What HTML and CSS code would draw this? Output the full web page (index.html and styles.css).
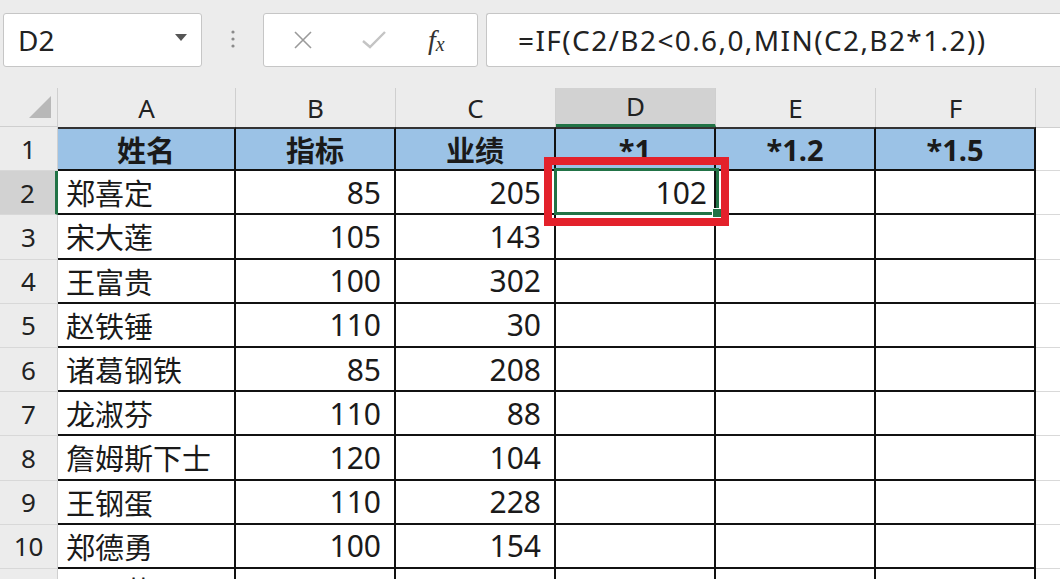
FILE: index.html
```html
<!DOCTYPE html>
<html lang="zh-CN">
<head>
    <meta charset="UTF-8">
    <title>Sheet</title>
    <link rel="stylesheet" href="styles.css">
</head>
<body>
    <div class="toolbar">
        <div class="namebox">
            <span>D2</span>
            <svg class="caret" width="12" height="7" viewBox="0 0 12 7"><path d="M0 0 L12 0 L6 7 Z" fill="#555"/></svg>
        </div>
        <div class="grip">
            <svg width="4" height="20" viewBox="0 0 4 20"><circle cx="2" cy="2" r="1.6" fill="#8a8a8a"/><circle cx="2" cy="9" r="1.6" fill="#8a8a8a"/><circle cx="2" cy="16" r="1.6" fill="#8a8a8a"/></svg>
        </div>
        <div class="fxbox">
            <svg class="icon-x" width="18" height="18" viewBox="0 0 18 18"><path d="M1 1 L17 17 M17 1 L1 17" stroke="#9a9a9a" stroke-width="1.6" fill="none"/></svg>
            <svg class="icon-ok" width="24" height="18" viewBox="0 0 24 18"><path d="M1 10 L8 16 L23 1" stroke="#c4c4c4" stroke-width="2.4" fill="none"/></svg>
            <span class="fx"><i>f</i><sub>x</sub></span>
        </div>
        <div class="formula">=IF(C2/B2&lt;0.6,0,MIN(C2,B2*1.2))</div>
    </div>

    <div class="sheet">
        <div class="corner"><svg width="22" height="22" viewBox="0 0 22 22"><path d="M22 0 L22 22 L0 22 Z" fill="#b8b8b8"/></svg></div>
        <div class="ch">A</div>
        <div class="ch">B</div>
        <div class="ch">C</div>
        <div class="ch active">D</div>
        <div class="ch">E</div>
        <div class="ch">F</div>
        <div class="ch rest"></div>

        <div class="rh">1</div>
        <div class="c hd">姓名</div>
        <div class="c hd">指标</div>
        <div class="c hd">业绩</div>
        <div class="c hd">*1</div>
        <div class="c hd">*1.2</div>
        <div class="c hd">*1.5</div>
        <div class="x top"></div>

        <div class="rh active">2</div>
        <div class="c">郑喜定</div>
        <div class="c n">85</div>
        <div class="c n">205</div>
        <div class="c n current">102</div>
        <div class="c"></div>
        <div class="c"></div>
        <div class="x"></div>

        <div class="rh">3</div>
        <div class="c">宋大莲</div>
        <div class="c n">105</div>
        <div class="c n">143</div>
        <div class="c"></div>
        <div class="c"></div>
        <div class="c"></div>
        <div class="x"></div>

        <div class="rh">4</div>
        <div class="c">王富贵</div>
        <div class="c n">100</div>
        <div class="c n">302</div>
        <div class="c"></div>
        <div class="c"></div>
        <div class="c"></div>
        <div class="x"></div>

        <div class="rh">5</div>
        <div class="c">赵铁锤</div>
        <div class="c n">110</div>
        <div class="c n">30</div>
        <div class="c"></div>
        <div class="c"></div>
        <div class="c"></div>
        <div class="x"></div>

        <div class="rh">6</div>
        <div class="c">诸葛钢铁</div>
        <div class="c n">85</div>
        <div class="c n">208</div>
        <div class="c"></div>
        <div class="c"></div>
        <div class="c"></div>
        <div class="x"></div>

        <div class="rh">7</div>
        <div class="c">龙淑芬</div>
        <div class="c n">110</div>
        <div class="c n">88</div>
        <div class="c"></div>
        <div class="c"></div>
        <div class="c"></div>
        <div class="x"></div>

        <div class="rh">8</div>
        <div class="c">詹姆斯下士</div>
        <div class="c n">120</div>
        <div class="c n">104</div>
        <div class="c"></div>
        <div class="c"></div>
        <div class="c"></div>
        <div class="x"></div>

        <div class="rh">9</div>
        <div class="c">王钢蛋</div>
        <div class="c n">110</div>
        <div class="c n">228</div>
        <div class="c"></div>
        <div class="c"></div>
        <div class="c"></div>
        <div class="x"></div>

        <div class="rh">10</div>
        <div class="c">郑德勇</div>
        <div class="c n">100</div>
        <div class="c n">154</div>
        <div class="c"></div>
        <div class="c"></div>
        <div class="c"></div>
        <div class="x"></div>

        <div class="rh">11</div>
        <div class="c">马晨蕾</div>
        <div class="c n">110</div>
        <div class="c n">44</div>
        <div class="c"></div>
        <div class="c"></div>
        <div class="c"></div>
        <div class="x"></div>

        <!-- active cell + annotation -->
        <div class="selection"><span class="handle"></span></div>
        <div class="redbox"></div>
    </div>
</body>
</html>
```

FILE: styles.css
```css
body {
    margin: 0;
    width: 1060px;
    height: 579px;
    overflow: hidden;
    background-color: #ececec;
    font-family: "Noto Sans", "Noto Sans CJK SC", sans-serif;
    color: #1a1a1a;
}

.toolbar {
    display: flex;
    align-items: flex-start;
    height: 88px;
    padding: 13px 0 0 3px;
    box-sizing: border-box;
}

.namebox {
    width: 199px;
    height: 54px;
    box-sizing: border-box;
    background-color: #fff;
    border: 1px solid #c6c6c6;
    border-radius: 3px;
    display: flex;
    align-items: center;
    justify-content: space-between;
    padding: 0 14px 0 14px;
    font-size: 28px;
    color: #222;
}

.namebox .caret {
    margin-top: -6px;
}

.grip {
    width: 61px;
    height: 54px;
    display: flex;
    align-items: center;
    justify-content: center;
}

.fxbox {
    width: 215px;
    height: 54px;
    box-sizing: border-box;
    background-color: #fff;
    border: 1px solid #c6c6c6;
    border-radius: 3px;
    display: flex;
    align-items: center;
    padding-left: 30px;
}

.icon-x {
    margin-right: 50px;
}

.icon-ok {
    margin-right: 42px;
}

.fx {
    font-family: "Liberation Serif", serif;
    font-size: 28px;
    color: #333;
    line-height: 1;
}

.fx sub {
    font-style: italic;
    font-size: 20px;
    vertical-align: -2px;
}

.formula {
    flex: 1;
    height: 54px;
    margin-left: 8px;
    box-sizing: border-box;
    background-color: #fff;
    border: 1px solid #c6c6c6;
    border-right: none;
    border-radius: 3px 0 0 3px;
    display: flex;
    align-items: center;
    padding-left: 31px;
    font-size: 28px;
    letter-spacing: 1.4px;
    color: #222;
    white-space: nowrap;
}

.sheet {
    position: relative;
    display: grid;
    grid-template-columns: 58px 178px 160px 160px 160px 160px 160px 1fr;
    grid-template-rows: 39px;
    grid-auto-rows: 44.2px;
    background-color: #fff;
}

.corner {
    background-color: #ececec;
    border-right: 1px solid #cfcfcf;
    border-bottom: 1px solid #cfcfcf;
    display: flex;
    align-items: flex-end;
    justify-content: flex-end;
    padding: 0 6px 8px 0;
    box-sizing: border-box;
}

.ch {
    background-color: #ececec;
    border-right: 1px solid #cfcfcf;
    box-sizing: border-box;
    display: flex;
    align-items: center;
    justify-content: center;
    font-size: 26px;
    color: #222;
}

.ch.active {
    background-color: #d2d2d2;
    border-bottom: 3px solid #217346;
}

.ch.rest {
    border-right: none;
}

.rh {
    background-color: #ececec;
    border-right: 1px solid #cfcfcf;
    border-bottom: 1px solid #d8d8d8;
    box-sizing: border-box;
    display: flex;
    align-items: center;
    justify-content: center;
    font-size: 26px;
    color: #222;
}

.rh.active {
    background-color: #d2d2d2;
    border-right: 3px solid #217346;
}

.c {
    border-right: 2px solid #111;
    border-bottom: 2px solid #111;
    box-sizing: border-box;
    display: flex;
    align-items: center;
    padding: 0 8px;
    font-size: 29px;
    white-space: nowrap;
    overflow: hidden;
}

.c.n {
    justify-content: flex-end;
    padding-right: 13px;
    font-size: 30px;
}

.c.current {
    padding-right: 7px;
}

.c.hd {
    background-color: #9bc2e6;
    border-top: 2px solid #333;
    justify-content: center;
    font-weight: bold;
    font-size: 29px;
}

.x {
    border-bottom: 1px solid #d9d9d9;
}

.x.top {
    border-top: 1px solid #cfcfcf;
}

.selection {
    position: absolute;
    left: 554px;
    top: 80px;
    width: 165px;
    height: 47px;
    box-sizing: border-box;
    border: 3px solid #217346;
}

.handle {
    position: absolute;
    right: -6px;
    bottom: -6px;
    width: 8px;
    height: 8px;
    background-color: #217346;
    border: 1px solid #fff;
}

.redbox {
    position: absolute;
    left: 544px;
    top: 69px;
    width: 185px;
    height: 69px;
    box-sizing: border-box;
    border: 8px solid #e3212b;
}
```
